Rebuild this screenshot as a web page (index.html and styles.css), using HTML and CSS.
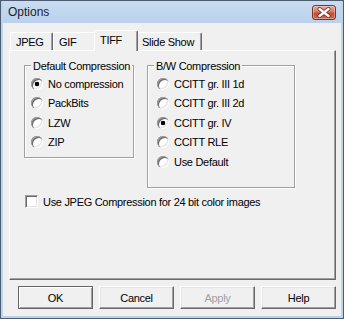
FILE: index.html
```html
<!DOCTYPE html>
<html lang="en">
<head>
    <meta charset="UTF-8">
    <meta name="viewport" content="width=device-width, initial-scale=1.0">
    <title>Options</title>
    <link rel="stylesheet" href="styles.css">
</head>
<body>
    <div class="window">
        <div class="titlebar">
            <span class="title">Options</span>
            <button class="close-btn" title="Close">
                <svg width="22" height="13" viewBox="0 0 22 13">
                    <path d="M6.5 3 L15.5 10 M15.5 3 L6.5 10" stroke="#6a2418" stroke-width="4" stroke-linecap="round"/>
                    <path d="M6.5 3 L15.5 10 M15.5 3 L6.5 10" stroke="#ffffff" stroke-width="2.4" stroke-linecap="round"/>
                </svg>
            </button>
        </div>

        <div class="client">
            <div class="tabs">
                <div class="tab tab-jpeg">JPEG</div>
                <div class="tab tab-gif">GIF</div>
                <div class="tab tab-tiff active">TIFF</div>
                <div class="tab tab-slide">Slide Show</div>
            </div>

            <div class="panel">
                <div class="groups">
                    <div class="group group-default">
                        <div class="group-title">Default Compression</div>
                        <div class="option"><span class="radio checked"></span>No compression</div>
                        <div class="option"><span class="radio"></span>PackBits</div>
                        <div class="option"><span class="radio"></span>LZW</div>
                        <div class="option"><span class="radio"></span>ZIP</div>
                    </div>
                    <div class="group group-bw">
                        <div class="group-title">B/W Compression</div>
                        <div class="option"><span class="radio"></span>CCITT gr. III 1d</div>
                        <div class="option"><span class="radio"></span>CCITT gr. III 2d</div>
                        <div class="option"><span class="radio checked"></span>CCITT gr. IV</div>
                        <div class="option"><span class="radio"></span>CCITT RLE</div>
                        <div class="option"><span class="radio"></span>Use Default</div>
                    </div>
                </div>
                <div class="option check-row"><span class="checkbox"></span>Use JPEG Compression for 24 bit color images</div>
            </div>

            <div class="buttons">
                <button class="btn default">OK</button>
                <button class="btn">Cancel</button>
                <button class="btn" disabled>Apply</button>
                <button class="btn">Help</button>
            </div>
        </div>
    </div>
</body>
</html>
```

FILE: styles.css
```css
body {
    margin: 0;
    font-family: "Liberation Sans", Arial, sans-serif;
    font-size: 11px;
    letter-spacing: -0.3px;
    color: #000;
    background: #fff;
}
.window {
    width: 344px;
    height: 319px;
    box-sizing: border-box;
    border: 1px solid #4d5c6e;
    background: #bcd4ee;
    padding: 0 2px 2px;
    display: flex;
    flex-direction: column;
}
/* Title bar */
.titlebar {
    height: 22px;
    flex: none;
    display: flex;
    align-items: flex-start;
    justify-content: space-between;
    padding: 0 5px;
    background: linear-gradient(#c9dcf1, #b9d1ec);
}
.title {
    font-size: 12px;
    letter-spacing: 0;
    line-height: 23px;
    color: #1e1e1e;
}
.close-btn {
    width: 24px;
    height: 15px;
    margin-top: 4px;
    padding: 0;
    border: 1px solid #7a3426;
    border-radius: 3px;
    background: linear-gradient(#e9a899 0%, #d77a66 45%, #c4472f 55%, #d06c52 100%);
    box-shadow: inset 0 0 0 1px rgba(255, 255, 255, 0.35);
    display: flex;
    align-items: center;
    justify-content: center;
}
/* Client area */
.client {
    flex: 1;
    background: #f0f0f0;
    display: flex;
    flex-direction: column;
    padding: 7px 5px 0 6px;
}
.tabs {
    display: flex;
    align-items: flex-end;
    height: 20px;
    padding-left: 1px;
}
.tab {
    height: 18px;
    box-sizing: border-box;
    padding: 1px 0 0 5px;
    line-height: 16px;
    background: #f0f0f0;
    border-top: 1px solid #fff;
    border-left: 1px solid #fff;
    border-right: 1px solid #696969;
    border-radius: 2px 2px 0 0;
    box-shadow: inset -1px 0 0 #a0a0a0;
}
.tab-jpeg { width: 43px; }
.tab-gif { width: 43px; }
.tab-tiff { width: 40px; }
.tab-slide { width: 66px; }
.tab.active {
    width: 44px;
    height: 21px;
    margin: 0 -2px -1px;
    padding-left: 5px;
    position: relative;
    z-index: 1;
}
.panel {
    height: 230px;
    box-sizing: border-box;
    border-top: 1px solid #fff;
    border-left: 1px solid #fff;
    border-right: 1px solid #696969;
    border-bottom: 1px solid #696969;
    box-shadow: inset -1px -1px 0 #a0a0a0;
    padding: 14px 0 0 14px;
}
.groups {
    display: flex;
    align-items: flex-start;
    gap: 13px;
}
/* Group boxes */
.group {
    box-sizing: border-box;
    border: 1px solid #a0a0a0;
    box-shadow: 1px 1px 0 #fff, inset 1px 1px 0 #fff;
}
.group-default {
    width: 110px;
    height: 93px;
    padding-left: 6px;
}
.group-bw {
    width: 148px;
    height: 123px;
    padding-left: 9px;
}
.group-title {
    width: fit-content;
    margin: -6px 0 1px 0;
    padding: 0 2px;
    line-height: 13px;
    background: #f0f0f0;
}
.group-default .group-title { margin-left: 0; }
.group-bw .group-title { margin-left: -3px; }
.option {
    height: 19.5px;
    display: flex;
    align-items: center;
    gap: 5px;
    white-space: nowrap;
}
.radio {
    width: 12px;
    height: 12px;
    flex: none;
    border-radius: 50%;
    background: #fff;
    box-shadow: inset 1px 1px 0 #a0a0a0, inset 2px 2px 0 #696969,
                inset -1px -1px 0 #fff, inset -2px -2px 0 #e3e3e3;
}
.radio.checked {
    background: radial-gradient(circle, #000 2px, #fff 2.6px);
}
.check-row {
    margin: 4px 0 0 1px;
}
.checkbox {
    width: 13px;
    height: 13px;
    flex: none;
    box-sizing: border-box;
    background: #fff;
    border: 1px solid;
    border-color: #a0a0a0 #fff #fff #a0a0a0;
    box-shadow: inset 1px 1px 0 #696969, inset -1px -1px 0 #e3e3e3;
}
/* Dialog buttons */
.buttons {
    display: flex;
    justify-content: flex-end;
    gap: 6px;
    margin-top: 6px;
}
.btn {
    width: 75px;
    height: 23px;
    padding: 0;
    font: inherit;
    letter-spacing: inherit;
    color: #000;
    background: #f0f0f0;
    border: 1px solid;
    border-color: #fff #696969 #696969 #fff;
    box-shadow: inset -1px -1px 0 #a0a0a0, inset 1px 1px 0 #e3e3e3;
}
.btn.default {
    border-color: #646464;
    box-shadow: inset 1px 1px 0 #fff, inset -1px -1px 0 #a0a0a0;
}
.btn:disabled {
    color: #a0a0a0;
}
```
